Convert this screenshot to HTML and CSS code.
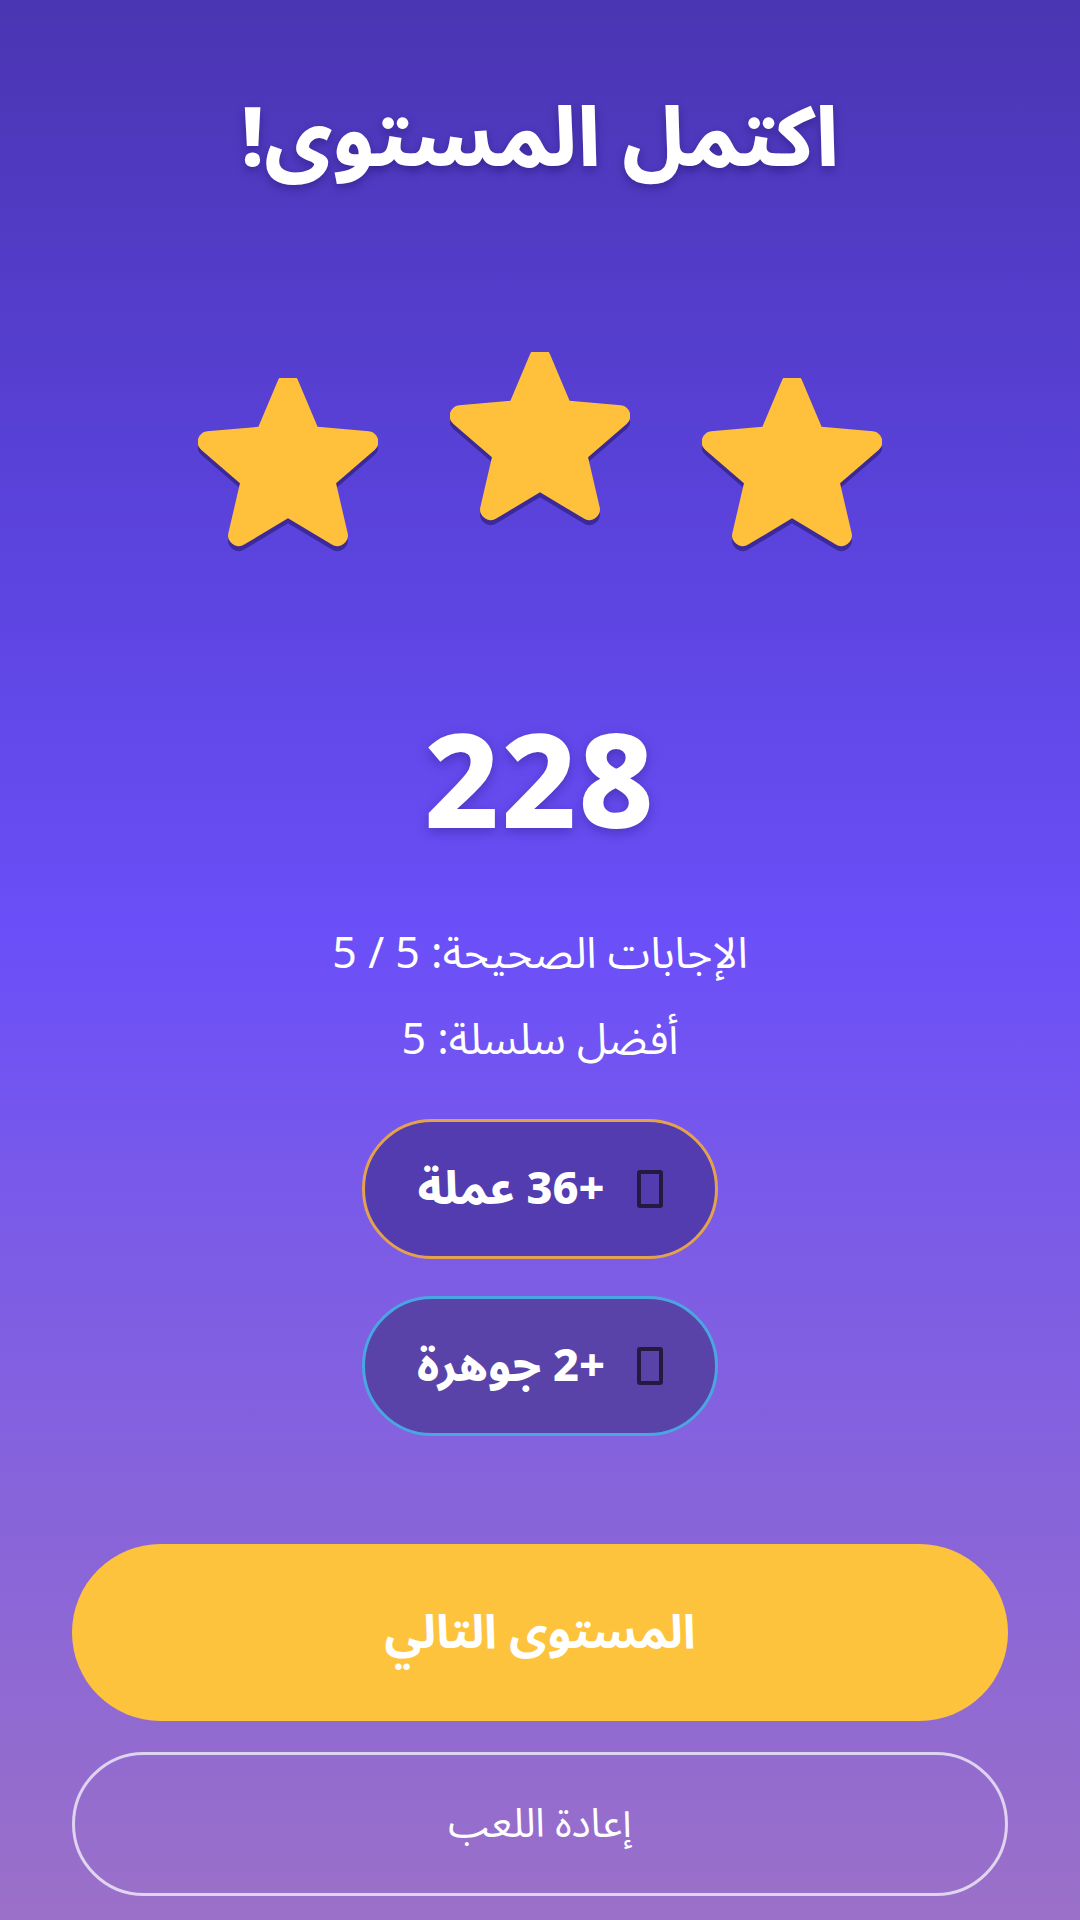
FILE: index.html
```html
<!DOCTYPE html>
<html lang="ar" dir="rtl">
<head>
    <meta charset="utf-8">
    <title>اكتمل المستوى</title>
    <link rel="stylesheet" href="styles.css">
</head>
<body>
    <div class="result-screen">
        <h1 class="result-title">اكتمل المستوى!</h1>

        <div class="stars">
            <svg class="star star-side" viewBox="140 -800 680 640"><path d="M480-269 314-169q-11 7-23 6t-21-8q-9-7-14-17.5t-2-23.5l44-189-147-127q-10-9-12.5-20.5T140-571q4-11 12-18t22-9l194-17 75-178q5-12 15.5-18t21.5-6q11 0 21.5 6t15.5 18l75 178 194 17q14 2 22 9t12 18q4 11 1.5 22.5T809-528L662-401l44 189q3 13-2 23.5T690-171q-9 7-21 8t-23-6L480-269Z"/></svg>
            <svg class="star star-middle" viewBox="140 -800 680 640"><path d="M480-269 314-169q-11 7-23 6t-21-8q-9-7-14-17.5t-2-23.5l44-189-147-127q-10-9-12.5-20.5T140-571q4-11 12-18t22-9l194-17 75-178q5-12 15.5-18t21.5-6q11 0 21.5 6t15.5 18l75 178 194 17q14 2 22 9t12 18q4 11 1.5 22.5T809-528L662-401l44 189q3 13-2 23.5T690-171q-9 7-21 8t-23-6L480-269Z"/></svg>
            <svg class="star star-side" viewBox="140 -800 680 640"><path d="M480-269 314-169q-11 7-23 6t-21-8q-9-7-14-17.5t-2-23.5l44-189-147-127q-10-9-12.5-20.5T140-571q4-11 12-18t22-9l194-17 75-178q5-12 15.5-18t21.5-6q11 0 21.5 6t15.5 18l75 178 194 17q14 2 22 9t12 18q4 11 1.5 22.5T809-528L662-401l44 189q3 13-2 23.5T690-171q-9 7-21 8t-23-6L480-269Z"/></svg>
        </div>

        <div class="score">228</div>

        <div class="stats">
            <div class="stat-line">الإجابات الصحيحة: 5 / 5</div>
            <div class="stat-line">أفضل سلسلة: 5</div>
        </div>

        <div class="rewards">
            <div class="reward reward-coins">
                <span class="reward-icon"></span>
                <span class="reward-text">+36 عملة</span>
            </div>
            <div class="reward reward-gems">
                <span class="reward-icon"></span>
                <span class="reward-text">+2 جوهرة</span>
            </div>
        </div>

        <div class="actions">
            <button class="btn btn-next">المستوى التالي</button>
            <button class="btn btn-replay">إعادة اللعب</button>
        </div>
    </div>
</body>
</html>
```

FILE: styles.css
```css
body {
    margin: 0;
    padding: 0;
    width: 1080px;
    height: 1920px;
    overflow: hidden;
    font-family: "Noto Sans Arabic", "Noto Sans", "DejaVu Sans", sans-serif;
    color: #fff;
    background: linear-gradient(180deg, #4a35b2 0%, #5c44e0 30%, #6b4ff8 49%, #7c5ce6 65%, #9a70c8 100%);
}
.result-screen {
    display: flex;
    flex-direction: column;
    align-items: center;
    height: 100%;
}
.result-title {
    margin: 0;
    padding-top: 90px;
    font-size: 82px;
    line-height: 100px;
    font-weight: 800;
    text-shadow: 0 4px 10px rgba(20, 10, 80, 0.35);
}
.stars {
    display: flex;
    align-items: flex-start;
    gap: 72px;
    margin-top: 162px;
}
.star {
    width: 180px;
    height: 169px;
    fill: #ffc13b;
    filter: drop-shadow(0 5px 0 rgba(40, 25, 110, 0.6));
}
.star-side {
    margin-top: 26px;
}
.score {
    margin-top: 155px;
    font-family: "Noto Sans", "DejaVu Sans", sans-serif;
    font-size: 130px;
    font-weight: 800;
    line-height: 151px;
    letter-spacing: 2px;
    text-shadow: 0 4px 12px rgba(30, 15, 110, 0.35);
}
.stats {
    margin-top: 59px;
    text-align: center;
}
.stat-line {
    font-size: 43px;
    line-height: 86px;
}
.rewards {
    display: flex;
    flex-direction: column;
    align-items: center;
    gap: 37px;
    margin-top: 35px;
}
.reward {
    display: flex;
    align-items: center;
    gap: 32px;
    height: 134px;
    padding: 0 52px;
    border-radius: 70px;
    font-size: 45px;
    font-weight: 800;
}
.reward-coins {
    background: #533bb0;
    border: 3px solid #e3a24e;
}
.reward-gems {
    background: #5a43a8;
    border: 3px solid #4aa6e2;
}
.reward-icon {
    width: 18px;
    height: 30px;
    border: 4px solid #231b3f;
    border-radius: 3px;
}
.actions {
    display: flex;
    flex-direction: column;
    gap: 31px;
    width: 936px;
    margin-top: 108px;
}
.btn {
    font-family: "Noto Sans Arabic", "Noto Sans", "DejaVu Sans", sans-serif;
    color: #fff;
    border-radius: 90px;
    cursor: pointer;
}
.btn-next {
    height: 177px;
    border: none;
    background: #fec33d;
    font-size: 47px;
    font-weight: 700;
}
.btn-replay {
    height: 144px;
    border: 3px solid rgba(255, 255, 255, 0.7);
    background: transparent;
    font-size: 40px;
}
```
